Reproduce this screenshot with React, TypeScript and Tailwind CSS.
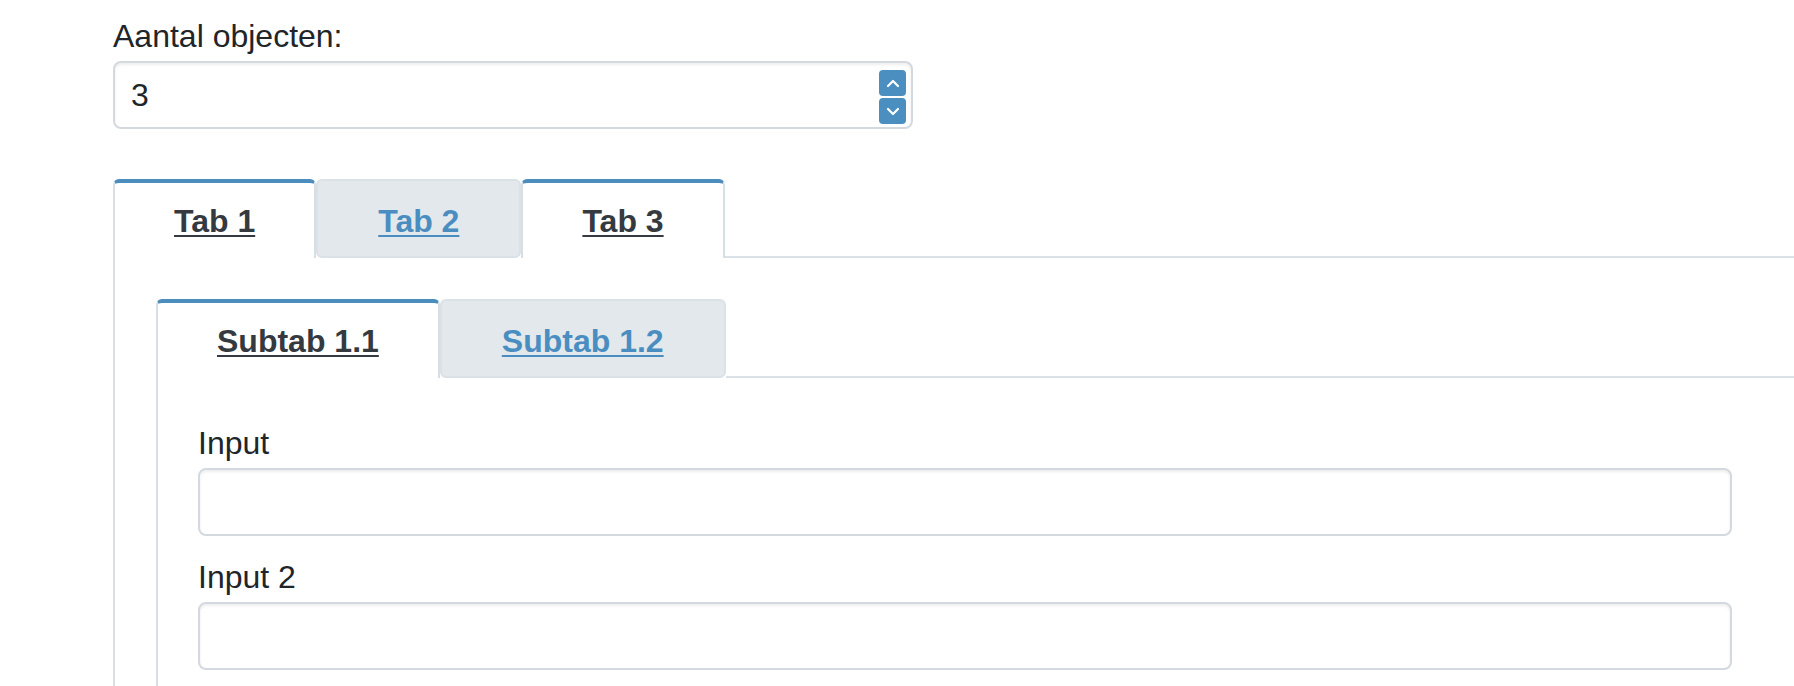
import React from "react";

function Chevron({ up }: { up?: boolean }) {
  return (
    <svg width="14" height="9" viewBox="0 0 14 9" fill="none">
      <path
        d={up ? "M2 7 L7 2 L12 7" : "M2 2 L7 7 L12 2"}
        stroke="white"
        strokeWidth="2.2"
        strokeLinecap="round"
        strokeLinejoin="round"
      />
    </svg>
  );
}

function ActiveTab({ label }: { label: string }) {
  return (
    <div className="h-[79px] bg-white border-t-4 border-l-2 border-r-2 border-t-[#4b8dbd] border-l-[#d6dfe6] border-r-[#d6dfe6] rounded-t-[6px] px-[59px] pt-[18px] pb-[17px]">
      <span className="block leading-[40px] text-[32px] font-bold text-[#343a40] underline decoration-[2px] underline-offset-[3px] whitespace-nowrap">
        {label}
      </span>
    </div>
  );
}

function InactiveTab({ label }: { label: string }) {
  return (
    <div className="h-[79px] bg-[#e3e8ec] border-2 border-[#dae1e7] rounded-[6px] px-[60px] pt-[20px] pb-[15px]">
      <span className="block leading-[40px] text-[32px] font-bold text-[#4a8ec1] underline decoration-[2px] underline-offset-[3px] whitespace-nowrap">
        {label}
      </span>
    </div>
  );
}

export default function App() {
  return (
    <div
      className="w-full min-h-[686px] overflow-hidden bg-white text-[#212529] pl-[113px] pt-[16px]"
      style={{ fontFamily: '"Liberation Sans", Arial, Helvetica, sans-serif' }}
    >
      <div className="text-[32px] leading-[40px] mb-[5px]">Aantal objecten:</div>
      <div className="w-[800px] h-[68px] border-2 border-[#d3d9de] rounded-[8px] shadow-[inset_0_2px_3px_rgba(0,0,0,0.07)] flex items-center pl-[16px] pr-[5px]">
        <span className="flex-1 text-[32px] leading-[40px]">3</span>
        <div className="flex flex-col gap-[2px] self-start pt-[7px]">
          <div className="w-[27px] h-[26px] rounded-[4px] bg-[#4b8fc1] flex items-center justify-center">
            <Chevron up />
          </div>
          <div className="w-[27px] h-[26px] rounded-[4px] bg-[#4b8fc1] flex items-center justify-center">
            <Chevron />
          </div>
        </div>
      </div>

      <div className="mt-[50px]">
        <div className="flex items-end">
          <ActiveTab label="Tab 1" />
          <InactiveTab label="Tab 2" />
          <ActiveTab label="Tab 3" />
          <div className="flex-1 border-b-2 border-[#dae1e7]" />
        </div>
        <div className="border-l-2 border-[#d6dfe6] pl-[41px] pt-[41px]">
          <div className="flex items-end">
            <ActiveTab label="Subtab 1.1" />
            <InactiveTab label="Subtab 1.2" />
            <div className="flex-1 border-b-2 border-[#dae1e7]" />
          </div>
          <div className="border-l-2 border-[#d6dfe6] pl-[40px] pt-[45px] pr-[62px] pb-[40px]">
            <div className="text-[32px] leading-[40px] mb-[5px]">Input</div>
            <div className="h-[68px] border-2 border-[#d3d9de] rounded-[8px] shadow-[inset_0_2px_3px_rgba(0,0,0,0.07)] mb-[21px]" />
            <div className="text-[32px] leading-[40px] mb-[5px]">Input 2</div>
            <div className="h-[68px] border-2 border-[#d3d9de] rounded-[8px] shadow-[inset_0_2px_3px_rgba(0,0,0,0.07)]" />
          </div>
        </div>
      </div>
    </div>
  );
}
